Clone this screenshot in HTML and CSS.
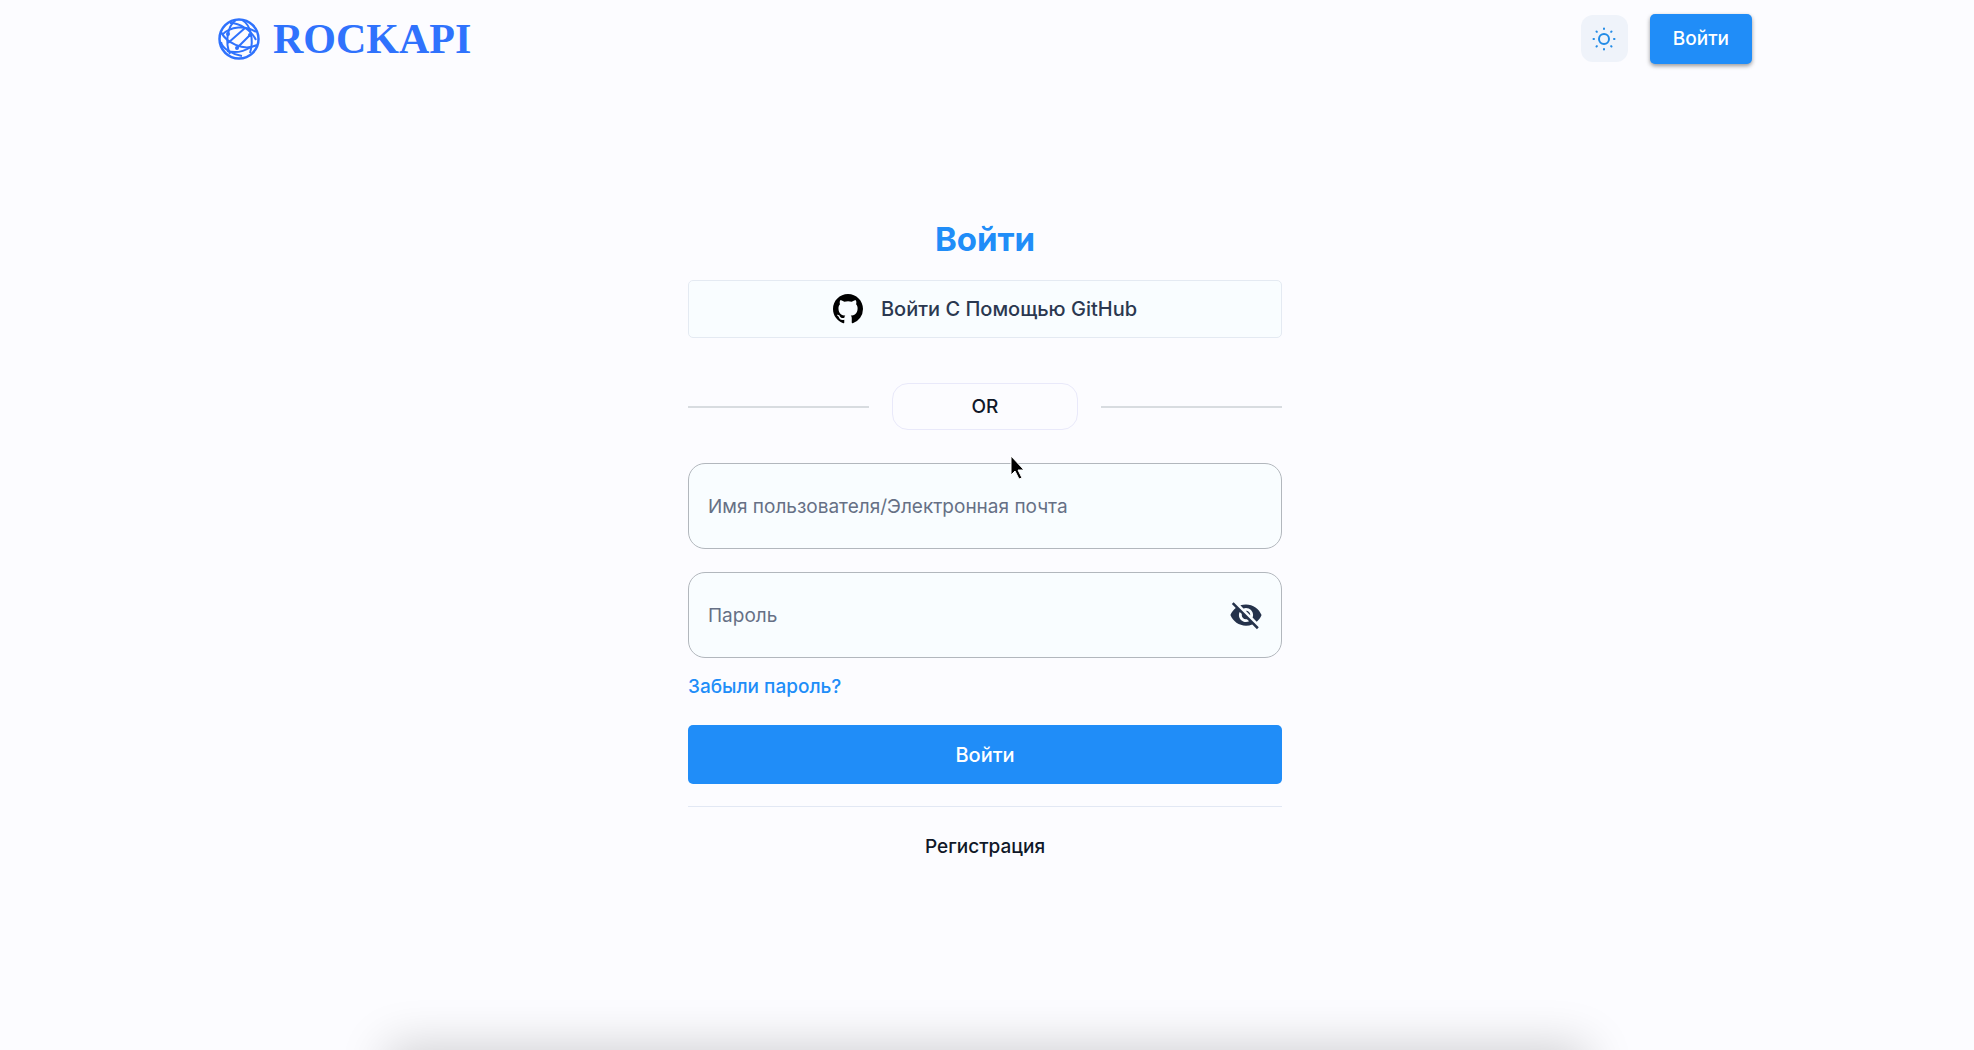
FILE: index.html
```html
<!DOCTYPE html>
<html lang="ru">
<head>
    <meta charset="UTF-8">
    <meta name="viewport" content="width=device-width, initial-scale=1.0">
    <title>ROCKAPI</title>
    <link rel="stylesheet" href="styles.css">
</head>
<body>
    <header class="header">
        <a class="logo" href="#">
            <svg class="logo-icon" viewBox="0 0 42 42" fill="none" stroke="currentColor" stroke-width="2">
                <circle cx="21" cy="21" r="19.500" stroke-width="2.500"/>
                <path d="M12 36C7 25 9 8 18 2M24 2c9 5 12 20 8 33"/>
                <path d="M3 14c5 10 22 20 36 13M3 24c1 6 10 12 21 14"/>
                <path d="M4 17C12 8 28 7 38 14M12 5c10 0 21 7 26 17"/>
                <path d="M10 25l17-15M19 30l13-13M9 33c7 2 16 1 24-4"/>
                <circle cx="10" cy="16" r="1" fill="currentColor"/>
                <circle cx="32" cy="17" r="1" fill="currentColor"/>
                <circle cx="19" cy="30" r="1" fill="currentColor"/>
            </svg>
            <span>ROCKAPI</span>
        </a>
        <div class="header-actions">
            <button class="theme-button" type="button" aria-label="Тема">
                <svg viewBox="0 0 24 24" fill="none" stroke="currentColor" stroke-width="2" stroke-linecap="round">
                    <circle cx="12" cy="12" r="5"/>
                    <path d="M12 1.500v.5M12 22v.5M1.500 12h.5M22 12h.5M4.500 4.500l.4.4M19.100 19.100l.4.4M4.500 19.500l.4-.4M19.100 4.900l.4-.4"/>
                </svg>
            </button>
            <a class="login-link" href="#">Войти</a>
        </div>
    </header>

    <main>
        <form class="login">
            <h1>Войти</h1>
            <button class="github-button" type="button">
                <svg viewBox="0 0 16 16" fill="currentColor">
                    <path d="M8 0C3.580 0 0 3.580 0 8c0 3.540 2.290 6.530 5.470 7.590.4.070.55-.17.55-.38 0-.19-.01-.82-.01-1.490-2.010.37-2.530-.49-2.690-.94-.09-.23-.48-.94-.82-1.130-.28-.15-.68-.52-.01-.53.63-.01 1.080.58 1.230.82.72 1.210 1.870.87 2.330.66.070-.52.28-.87.51-1.070-1.780-.2-3.640-.89-3.640-3.950 0-.87.31-1.590.82-2.150-.08-.2-.36-1.020.08-2.120 0 0 .67-.21 2.200.82.64-.18 1.320-.27 2-.27s1.360.09 2 .27c1.530-1.040 2.200-.82 2.200-.82.44 1.100.16 1.920.08 2.120.51.56.82 1.270.82 2.150 0 3.070-1.870 3.750-3.650 3.950.29.25.54.73.54 1.480 0 1.070-.01 1.930-.01 2.200 0 .21.15.46.55.38A8.010 8.010 0 0 0 16 8c0-4.420-3.580-8-8-8z"/>
                </svg>
                Войти С Помощью GitHub
            </button>

            <div class="or">
                <span>OR</span>
                <svg class="cursor" viewBox="0 0 16 26">
                    <path d="M1 1v19l4-4 4 8 3-1-4-8h6z" fill="#000" stroke="#fff"/>
                </svg>
            </div>

            <input class="field" type="text" aria-label="Имя пользователя/Электронная почта" placeholder="Имя пользователя/Электронная почта">
            <div class="password">
                <input class="field" type="password" aria-label="Пароль" placeholder="Пароль">
                <button class="eye-button" type="button" aria-label="Показать пароль">
                    <svg viewBox="0 0 24 24" fill="currentColor">
                        <path d="M12 7c2.760 0 5 2.240 5 5 0 .65-.13 1.260-.36 1.830l2.920 2.920c1.510-1.260 2.700-2.890 3.430-4.750-1.730-4.390-6-7.500-11-7.500-1.400 0-2.740.25-3.980.7l2.160 2.160C10.740 7.130 11.350 7 12 7zM2 4.270l2.280 2.280.46.46C3.080 8.300 1.780 10.020 1 12c1.730 4.390 6 7.500 11 7.500 1.550 0 3.030-.3 4.380-.84l.42.42L19.730 22 21 20.730 3.270 3 2 4.270zM7.530 9.800l1.550 1.550c-.05.21-.08.43-.08.65 0 1.660 1.340 3 3 3 .22 0 .44-.03.65-.08l1.550 1.550c-.67.33-1.410.53-2.200.53-2.760 0-5-2.240-5-5 0-.79.2-1.530.53-2.200zm4.310-.78l3.150 3.150.02-.16c0-1.660-1.340-3-3-3l-.17.010z"/>
                    </svg>
                </button>
            </div>
            <a class="forgot" href="#">Забыли пароль?</a>
            <button class="submit" type="submit">Войти</button>
            <div class="register">
                <a href="#">Регистрация</a>
            </div>
        </form>
    </main>
    <div class="bottom-shadow"></div>
</body>
</html>
```

FILE: styles.css
```css
* {
    box-sizing: border-box;
}

body {
    margin: 0;
    padding-right: 4px;
    min-height: 100vh;
    font-family: Inter, "Liberation Sans", sans-serif;
    font-size: 19px;
    line-height: 28px;
    color: #101828;
    background-color: #fcfcff;
}

a {
    color: inherit;
    text-decoration: none;
}

button, input {
    margin: 0;
    font: inherit;
}

button {
    cursor: pointer;
}

svg {
    display: block;
    flex: none;
}

/* Header */
.header {
    display: flex;
    align-items: center;
    justify-content: space-between;
    width: 90%;
    max-width: 1534px;
    height: 77px;
    margin: 0 auto;
}

.logo {
    display: flex;
    align-items: center;
    gap: 13px;
    font-family: "Liberation Serif", serif;
    font-size: 42px;
    font-weight: bold;
    color: #2f72fd;
}

.logo-icon {
    width: 42px;
    height: 42px;
}

.header-actions {
    display: flex;
    align-items: center;
    gap: 22px;
}

.theme-button {
    display: grid;
    place-items: center;
    width: 47px;
    height: 47px;
    padding: 0;
    border: none;
    border-radius: 12px;
    color: #228be6;
    background-color: #eff3fa;
}

.theme-button svg {
    width: 24px;
    height: 24px;
}

.login-link {
    padding: 11px 23px;
    border-radius: 5px;
    font-weight: 500;
    color: #fff;
    background-color: #208df8;
    box-shadow: 0 2px 4px rgba(0, 0, 0, 0.4);
}

/* Login form */
.login {
    display: flex;
    flex-direction: column;
    width: 90%;
    max-width: 594px;
    margin: 140px auto 0;
}

h1 {
    margin: 0 0 19px;
    font-size: 33px;
    line-height: 44px;
    text-align: center;
    color: #208df8;
}

.github-button {
    display: flex;
    align-items: center;
    justify-content: center;
    gap: 18px;
    height: 58px;
    border: 1px solid #e4eaf2;
    border-radius: 5px;
    font-size: 20px;
    font-weight: 500;
    color: #2b3850;
    background-color: #f9fdff;
}

.github-button svg {
    width: 30px;
    height: 30px;
    color: #000;
}

.or {
    position: relative;
    display: flex;
    align-items: center;
    gap: 23px;
    margin: 45px 0 33px;
    font-weight: 500;
}

.or::before, .or::after {
    content: '';
    flex: 1;
    height: 2px;
    background-color: #d8dce0;
}

.or span {
    width: 186px;
    padding: 9px 0 8px;
    border: 1px solid #e9e9fa;
    border-radius: 16px;
    text-align: center;
}

.cursor {
    position: absolute;
    top: 72px;
    left: 322px;
    width: 16px;
    height: 26px;
}

.field {
    width: 100%;
    height: 86px;
    padding: 0 19px;
    border: 1px solid #b2b7bd;
    border-radius: 17px;
    outline: none;
    color: #101828;
    background-color: #f9fdff;
}

.field::placeholder {
    color: #667085;
    opacity: 1;
}

.password {
    position: relative;
    margin-top: 23px;
}

.password .field {
    display: block;
    padding-right: 64px;
}

.eye-button {
    position: absolute;
    top: 26px;
    right: 19px;
    padding: 0;
    border: none;
    color: #25324b;
    background: none;
}

.eye-button svg {
    width: 34px;
    height: 34px;
}

.forgot {
    align-self: flex-start;
    margin: 15px 0 24px;
    font-weight: 500;
    color: #208df8;
}

.submit {
    height: 59px;
    border: none;
    border-radius: 5px;
    font-size: 20px;
    font-weight: 500;
    color: #fff;
    background-color: #208df8;
}

.register {
    margin-top: 22px;
    padding-top: 26px;
    border-top: 1px solid #e2e8f4;
    font-weight: 500;
    text-align: center;
}

/* Shadow at the lower edge of the window */
.bottom-shadow {
    position: fixed;
    top: 100%;
    left: 20%;
    right: 20%;
    height: 40px;
    box-shadow: 0 4px 48px 8px rgba(0, 0, 0, 0.18);
}
```
